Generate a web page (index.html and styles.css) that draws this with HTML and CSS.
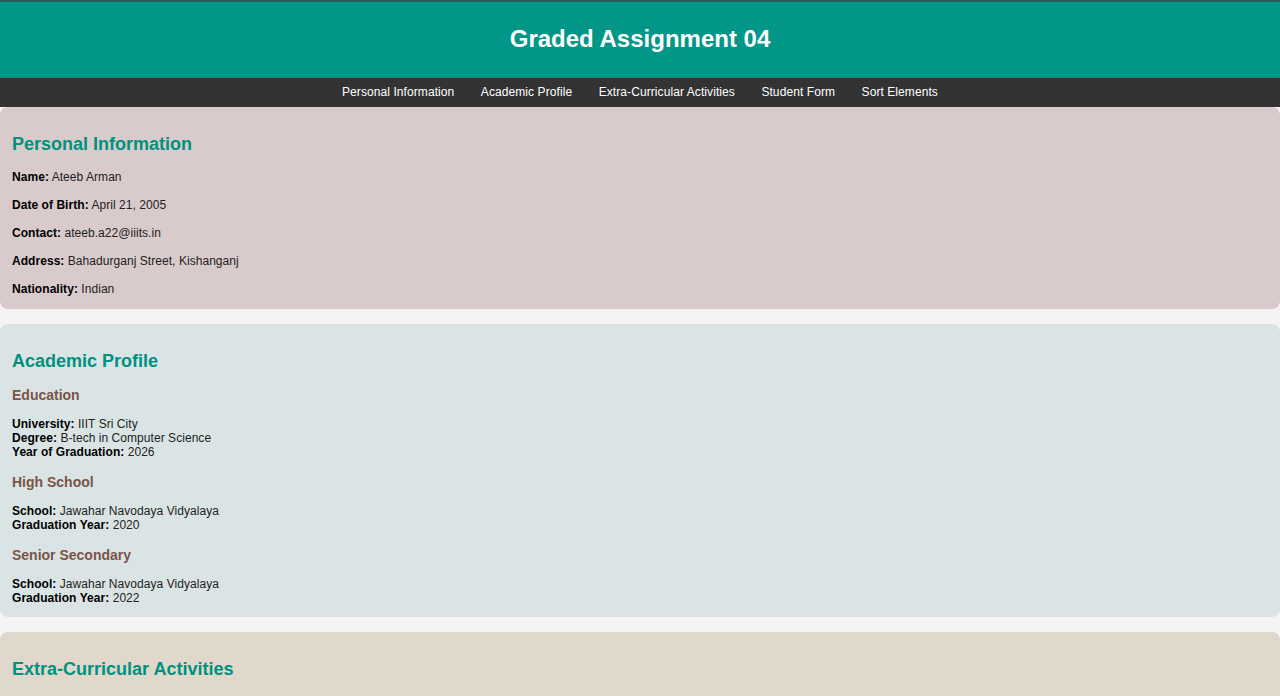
FILE: index.html
```html
<!DOCTYPE html>
<html lang="en">
<head>
<meta charset="utf-8">
<title>Graded Assignment 04</title>
<link rel="stylesheet" href="styles.css">
</head>
<body>
<header class="site-header">
  <h1 class="site-title">Graded Assignment 04</h1>
</header>
<nav class="site-nav">
  <a href="#personal">Personal Information</a>
  <a href="#academic">Academic Profile</a>
  <a href="#extra">Extra-Curricular Activities</a>
  <a href="#form">Student Form</a>
  <a href="#sort">Sort Elements</a>
</nav>
<main>
  <section class="card card-personal" id="personal">
    <h2>Personal Information</h2>
    <p><strong>Name:</strong> Ateeb Arman</p>
    <p><strong>Date of Birth:</strong> April 21, 2005</p>
    <p><strong>Contact:</strong> ateeb.a22@iiits.in</p>
    <p><strong>Address:</strong> Bahadurganj Street, Kishanganj</p>
    <p><strong>Nationality:</strong> Indian</p>
  </section>
  <section class="card card-academic" id="academic">
    <h2>Academic Profile</h2>
    <h3>Education</h3>
    <p><strong>University:</strong> IIIT Sri City<br><strong>Degree:</strong> B-tech in Computer Science<br><strong>Year of Graduation:</strong> 2026</p>
    <h3>High School</h3>
    <p><strong>School:</strong> Jawahar Navodaya Vidyalaya<br><strong>Graduation Year:</strong> 2020</p>
    <h3>Senior Secondary</h3>
    <p><strong>School:</strong> Jawahar Navodaya Vidyalaya<br><strong>Graduation Year:</strong> 2022</p>
  </section>
  <section class="card card-extra" id="extra">
    <h2>Extra-Curricular Activities</h2>
    <p>&nbsp;</p>
  </section>
</main>
</body>
</html>
```
FILE: styles.css
```css
html, body {
  margin: 0;
  padding: 0;
}
body {
  background: #f4f4f4;
  font-family: "Liberation Sans", Arial, sans-serif;
  color: #222;
  font-size: 12px;
  line-height: 14px;
  letter-spacing: 0.05px;
}
.site-header {
  background: #009688;
  border-top: 2px solid #2c5b5b;
  box-sizing: border-box;
  height: 78px;
  padding-bottom: 2px;
  display: flex;
  align-items: center;
  justify-content: center;
}
.site-title {
  margin: 0;
  color: #fff;
  font-size: 24px;
  line-height: 28px;
  font-weight: bold;
  letter-spacing: 0;
}
.site-nav {
  background: #333;
  height: 29px;
  box-sizing: border-box;
  padding-bottom: 2px;
  display: flex;
  align-items: center;
  justify-content: center;
  gap: 26.5px;
}
.site-nav a {
  color: #fff;
  text-decoration: none;
  font-size: 12px;
  letter-spacing: 0.08px;
}
.card {
  display: flow-root;
  border-radius: 8px;
  padding: 12px 12px 0;
  margin-bottom: 15px;
}
.card-personal { background: #d9cbcb; }
.card-academic { background: #dae4e5; }
.card-extra { background: #e0d8cb; }
.card h2 {
  margin: 15px 0 15px;
  font-size: 18px;
  line-height: 21px;
  color: #00917f;
  letter-spacing: 0;
}
.card h3 {
  margin: 15px 0 14px;
  font-size: 14px;
  line-height: 16px;
  color: #795548;
  letter-spacing: 0;
}
.card p {
  margin: 14px 0;
}
.card p:last-child {
  margin-bottom: 13px;
}
.card-academic p:last-child {
  margin-bottom: 12px;
}
.card strong {
  color: #000;
}
```
